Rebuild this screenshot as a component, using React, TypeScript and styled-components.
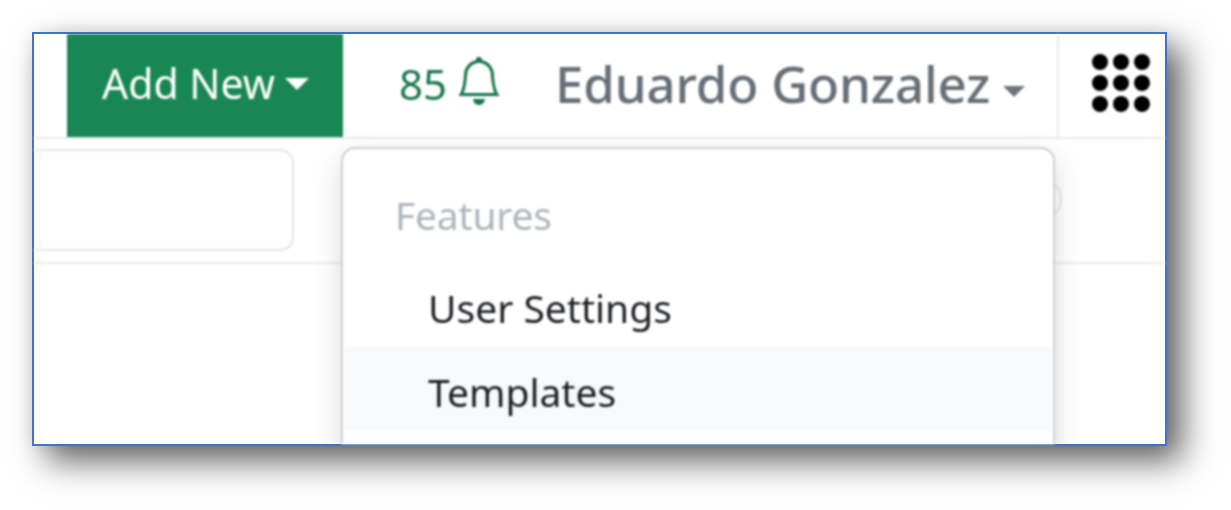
import React from 'react';
import styled, { createGlobalStyle } from 'styled-components';
import { BsBell } from 'react-icons/bs';

const GlobalStyle = createGlobalStyle`
  html, body {
    margin: 0;
    padding: 0;
    background: #fff;
    font-family: "Noto Sans", "Open Sans", sans-serif;
  }
`;

const Page = styled.div`
  box-sizing: border-box;
  height: 510px;
  padding: 32px 0 0 32px;
  overflow: hidden;
`;

const Frame = styled.div`
  box-sizing: border-box;
  width: 1135px;
  height: 414px;
  background: #fff;
  border: 2px solid #4472c4;
  box-shadow: 15px 15px 32px rgba(0, 0, 0, 0.62), 0 0 16px rgba(0, 0, 0, 0.07);
`;

const Clip = styled.div`
  position: relative;
  height: 100%;
  overflow: hidden;
  filter: blur(0.8px);
`;

const Navbar = styled.nav`
  display: flex;
  align-items: stretch;
  box-sizing: border-box;
  height: 105px;
  padding-left: 33px;
  border-bottom: 2px solid #e9ebee;
`;

const AddNew = styled.button`
  display: flex;
  align-items: center;
  gap: 10px;
  width: 276px;
  height: 103px;
  padding: 0 0 5px 35px;
  border: 0;
  background: #198754;
  color: #fff;
  font: 400 41px "Noto Sans", sans-serif;
`;

const Caret = styled.span<{ $color: string; $size: number; $drop: number }>`
  width: 0;
  height: 0;
  margin-top: ${p => p.$drop}px;
  border-left: ${p => p.$size}px solid transparent;
  border-right: ${p => p.$size}px solid transparent;
  border-top: ${p => p.$size}px solid ${p => p.$color};
`;

const Alerts = styled.div`
  display: flex;
  align-items: center;
  gap: 8px;
  margin-left: 56px;
  padding-bottom: 5px;
  color: #17744a;
  font-size: 42px;
  svg {
    margin-top: -4px;
  }
`;

const UserName = styled.div`
  display: flex;
  align-items: center;
  gap: 13px;
  margin-left: 52px;
  padding-bottom: 5px;
  color: #666f77;
  font-size: 51px;
  font-weight: 500;
  letter-spacing: -0.2px;
`;

const AppsCell = styled.div`
  display: flex;
  align-items: center;
  margin-left: auto;
  width: 108px;
  box-sizing: border-box;
  padding: 0 0 5px 33px;
  border-left: 2px solid #e9ebee;
`;

const SubBar = styled.div`
  position: relative;
  display: flex;
  align-items: center;
  box-sizing: border-box;
  height: 125px;
  padding-bottom: 1px;
  border-bottom: 2px solid #e9ebee;
`;

const SearchBox = styled.div`
  box-sizing: border-box;
  width: 280px;
  height: 102px;
  margin-left: -20px;
  border: 2px solid #e3e6ea;
  border-radius: 14px;
`;

const RoundButton = styled.div`
  position: absolute;
  top: 38px;
  left: 984px;
  width: 44px;
  height: 44px;
  box-sizing: border-box;
  border: 2px solid #e6e8eb;
  border-radius: 50%;
`;

const Dropdown = styled.div`
  position: absolute;
  top: 113px;
  left: 307px;
  box-sizing: border-box;
  width: 714px;
  height: 340px;
  padding-top: 44px;
  background: #fff;
  border: 2px solid #cfd1d3;
  border-radius: 14px;
  box-shadow: 0 10px 28px rgba(0, 0, 0, 0.15);
`;

const MenuHeader = styled.div`
  height: 70px;
  padding-left: 52px;
  color: #adb5bd;
  font-size: 39px;
  line-height: 44px;
  letter-spacing: -0.2px;
`;

const MenuItem = styled.div<{ $active?: boolean }>`
  height: 84px;
  margin: 0 2px;
  padding-left: 83px;
  background: ${p => (p.$active ? '#f8f9fa' : 'transparent')};
  color: #1c1f23;
  font-size: 39px;
  line-height: 89px;
`;

const dots = [0, 1, 2].flatMap(row => [0, 1, 2].map(col => ({ row, col })));

const AppsIcon = () => (
  <svg width="58" height="58" viewBox="0 0 58 58" fill="#000">
    {dots.map(d => (
      <circle key={`${d.row}-${d.col}`} cx={8 + d.col * 21} cy={8 + d.row * 21} r="8" />
    ))}
  </svg>
);

export default function App() {
  return (
    <>
      <GlobalStyle />
      <Page>
        <Frame>
          <Clip>
            <Navbar>
              <AddNew>
                Add New
                <Caret $color="#fff" $size={12} $drop={2} />
              </AddNew>
              <Alerts>
                85
                <BsBell size={48} />
              </Alerts>
              <UserName>
                Eduardo Gonzalez
                <Caret $color="#6c757d" $size={11} $drop={16} />
              </UserName>
              <AppsCell>
                <AppsIcon />
              </AppsCell>
            </Navbar>
            <SubBar>
              <SearchBox />
              <RoundButton />
            </SubBar>
            <Dropdown>
              <MenuHeader>Features</MenuHeader>
              <MenuItem>User Settings</MenuItem>
              <MenuItem $active>Templates</MenuItem>
            </Dropdown>
          </Clip>
        </Frame>
      </Page>
    </>
  );
}
